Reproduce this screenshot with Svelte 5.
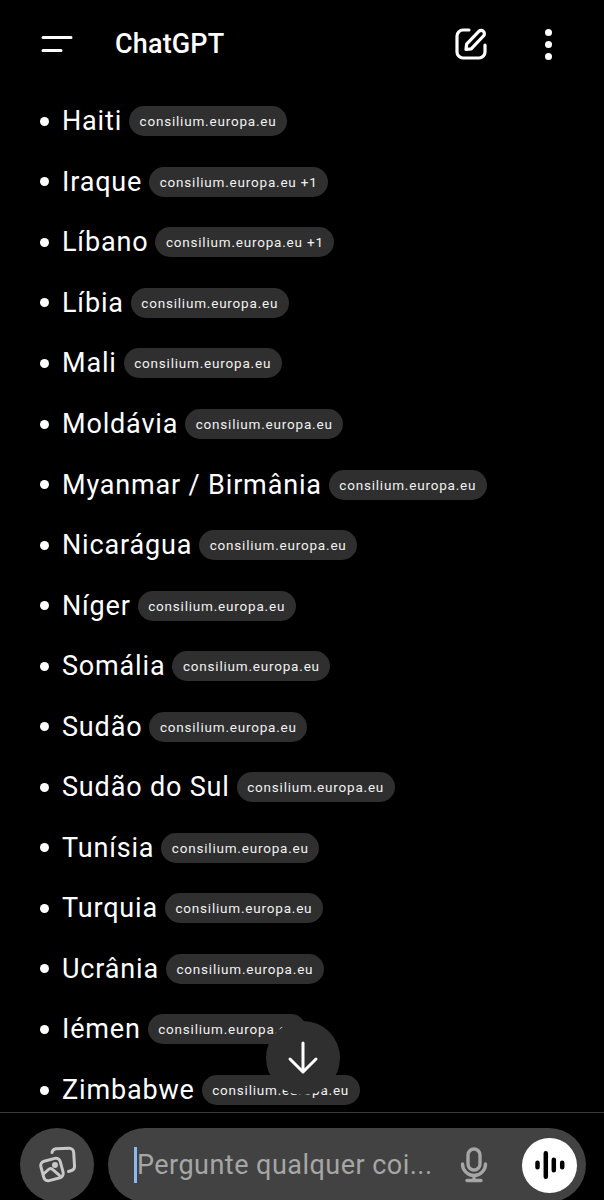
<script>
  const countries = [
    { name: 'Haiti', source: 'consilium.europa.eu' },
    { name: 'Iraque', source: 'consilium.europa.eu +1' },
    { name: 'Líbano', source: 'consilium.europa.eu +1' },
    { name: 'Líbia', source: 'consilium.europa.eu' },
    { name: 'Mali', source: 'consilium.europa.eu' },
    { name: 'Moldávia', source: 'consilium.europa.eu' },
    { name: 'Myanmar / Birmânia', source: 'consilium.europa.eu' },
    { name: 'Nicarágua', source: 'consilium.europa.eu' },
    { name: 'Níger', source: 'consilium.europa.eu' },
    { name: 'Somália', source: 'consilium.europa.eu' },
    { name: 'Sudão', source: 'consilium.europa.eu' },
    { name: 'Sudão do Sul', source: 'consilium.europa.eu' },
    { name: 'Tunísia', source: 'consilium.europa.eu' },
    { name: 'Turquia', source: 'consilium.europa.eu' },
    { name: 'Ucrânia', source: 'consilium.europa.eu' },
    { name: 'Iémen', source: 'consilium.europa.eu' },
    { name: 'Zimbabwe', source: 'consilium.europa.eu' }
  ]
</script>

<div class="screen">
  <header class="topbar">
    <svg class="menu" width="32" height="20" viewBox="0 0 32 20" aria-hidden="true">
      <path d="M2 3.500h28M2 16.500h18" />
    </svg>
    <span class="title">ChatGPT</span>
    <svg class="compose" width="34" height="34" viewBox="0 0 34 34" aria-hidden="true">
      <path d="M15 3H9a6 6 0 0 0-6 6v16a6 6 0 0 0 6 6h16a6 6 0 0 0 6-6v-7" />
      <path d="M12 22.500l.6-5.400L24.800 4.400a3.200 3.200 0 0 1 4.600 0 3.200 3.200 0 0 1 0 4.600L17.200 21.800z" />
    </svg>
    <div class="dots" aria-hidden="true"><i></i><i></i><i></i></div>
  </header>

  <ul class="list">
    {#each countries as c}
      <li>
        <span class="bullet"></span>
        <span class="name">{c.name}</span>
        <span class="pill">{c.source}</span>
      </li>
    {/each}
  </ul>

  <button class="scroll" aria-label="Rolar para baixo">
    <svg width="32" height="34" viewBox="0 0 32 34" aria-hidden="true">
      <path d="M16 2v29M3 18l13 13 13-13" />
    </svg>
  </button>

  <footer class="composer">
    <button class="attach" aria-label="Imagens">
      <svg width="40" height="40" viewBox="0 0 40 40" aria-hidden="true">
        <path d="M15 7.500C15.500 5 17 4 19 3.800l13-.5a4.500 4.500 0 0 1 4.700 4.200l.8 13.500a4 4 0 0 1-3 4.500l-3 1" />
        <rect x="5" y="14.500" width="20" height="20" rx="4.500" transform="rotate(-15 15 24.500)" />
        <path d="M6.500 29l5-4.500a3 3 0 0 1 4-.2l7 6" />
        <circle cx="18" cy="20" r="1.500" />
      </svg>
    </button>
    <div class="input">
      <span class="caret"></span>
      <span class="placeholder">Pergunte qualquer coi...</span>
      <svg class="mic" width="28" height="36" viewBox="0 0 28 36" aria-hidden="true">
        <rect x="8" y="2" width="12" height="21" rx="6" />
        <path d="M2.500 17a11.500 11.500 0 0 0 23 0M14 28.500V33M7 33.500h14" />
      </svg>
      <div class="voice">
        <svg width="30" height="30" viewBox="0 0 30 30" aria-hidden="true">
          <path d="M2.500 12.700v4.600M10.800 3.300v23.400M18.800 9.800v10.400M27.200 12.700v4.600" />
        </svg>
      </div>
    </div>
  </footer>
</div>

<style>
  :global(body) {
    background: #000;
  }

  .screen {
    position: relative;
    width: 604px;
    height: 1200px;
    overflow: hidden;
    background: #000;
    color: #fff;
    font-family: Roboto, "Liberation Sans", sans-serif;
    display: flex;
    flex-direction: column;
  }

  .topbar {
    height: 91px;
    padding: 0 52px 3px 41px;
    box-sizing: border-box;
    display: flex;
    align-items: center;
    flex-shrink: 0;
  }

  .menu path {
    fill: none;
    stroke: #fff;
    stroke-width: 3;
    stroke-linecap: round;
  }

  .title {
    margin-left: 42px;
    font-size: 27px;
    font-weight: 500;
    letter-spacing: 0.150px;
    flex: 1;
  }

  .compose {
    margin-right: 57px;
  }

  .compose path {
    fill: none;
    stroke: #fff;
    stroke-width: 3.200;
    stroke-linecap: round;
    stroke-linejoin: round;
  }

  .dots {
    width: 7px;
    display: flex;
    flex-direction: column;
    gap: 5px;
  }

  .dots i {
    width: 7px;
    height: 7px;
    border-radius: 50%;
    background: #fff;
  }

  .list {
    list-style: none;
    margin: 0;
    padding: 0 0 0 40px;
    flex: 1;
  }

  li {
    height: 60.550px;
    display: flex;
    align-items: center;
  }

  .bullet {
    width: 9px;
    height: 9px;
    border-radius: 50%;
    background: #fff;
    margin-right: 13px;
    flex-shrink: 0;
  }

  .name {
    font-size: 27px;
    letter-spacing: 0.830px;
    margin-right: 7px;
    white-space: nowrap;
  }

  .pill {
    height: 30px;
    line-height: 30px;
    padding: 0 10.500px;
    border-radius: 15px;
    background: #2f2f2f;
    font-size: 13.500px;
    letter-spacing: 0.800px;
    white-space: nowrap;
    color: #f2f2f2;
  }

  .scroll {
    position: absolute;
    left: 266px;
    top: 1021px;
    width: 74px;
    height: 74px;
    padding: 0;
    border: 0;
    border-radius: 50%;
    background: #2f2f2f;
    display: flex;
    align-items: center;
    justify-content: center;
  }

  .scroll path {
    fill: none;
    stroke: #fff;
    stroke-width: 3;
    stroke-linecap: round;
    stroke-linejoin: round;
  }

  .composer {
    position: absolute;
    left: 0;
    right: 0;
    top: 1112px;
    height: 90px;
    box-sizing: border-box;
    border-top: 1px solid #3a3a3a;
    padding: 15px 18px 0 20px;
    display: flex;
    gap: 14px;
    background: #000;
  }

  .attach {
    width: 74px;
    height: 74px;
    padding: 0;
    border: 0;
    border-radius: 50%;
    background: #424242;
    display: flex;
    align-items: center;
    justify-content: center;
    flex-shrink: 0;
  }

  .attach path,
  .attach rect,
  .attach circle {
    fill: none;
    stroke: #c8c8c8;
    stroke-width: 3;
    stroke-linecap: round;
    stroke-linejoin: round;
  }

  .input {
    flex: 1;
    height: 74px;
    border-radius: 37px;
    background: #424242;
    display: flex;
    align-items: center;
    padding: 0 9px 0 26px;
  }

  .caret {
    width: 3px;
    height: 36px;
    background: #8ab8f0;
    flex-shrink: 0;
  }

  .placeholder {
    flex: 1;
    font-size: 27px;
    letter-spacing: 0.470px;
    color: #a6a6a6;
    white-space: nowrap;
  }

  .mic {
    margin-right: 34px;
  }

  .mic rect,
  .mic path {
    fill: none;
    stroke: #a6a6a6;
    stroke-width: 3.400;
    stroke-linecap: round;
  }

  .voice {
    width: 55px;
    height: 55px;
    border-radius: 50%;
    background: #fff;
    display: flex;
    align-items: center;
    justify-content: center;
    flex-shrink: 0;
  }

  .voice path {
    fill: none;
    stroke: #000;
    stroke-width: 4.500;
    stroke-linecap: round;
  }
</style>
